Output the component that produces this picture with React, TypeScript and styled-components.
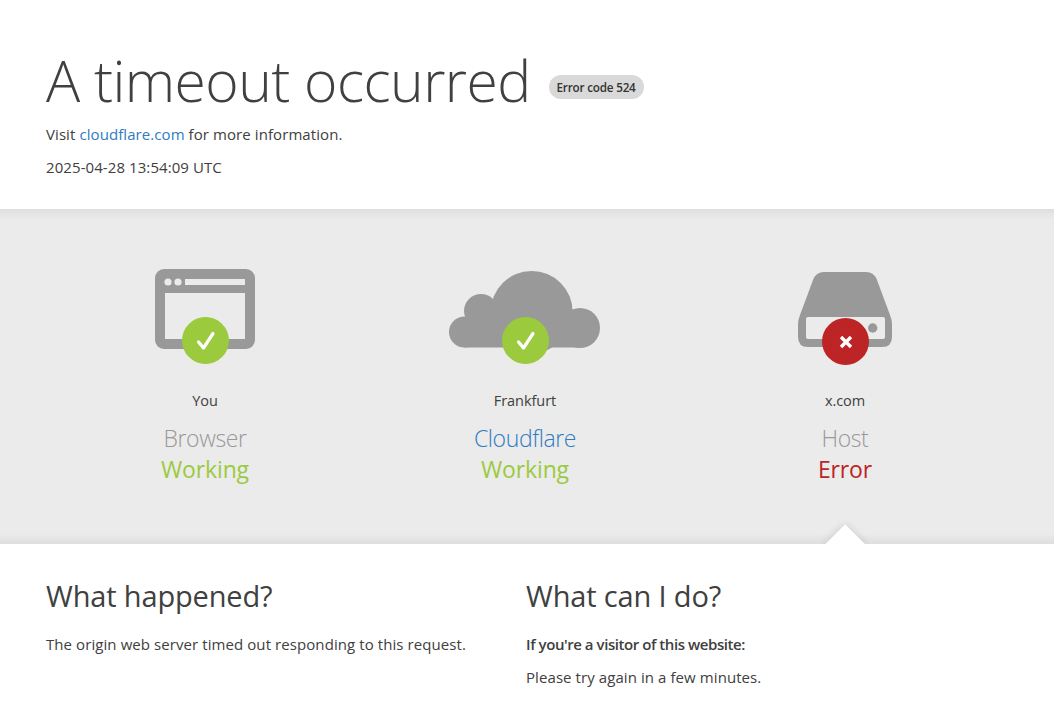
import React from 'react';
import styled, { createGlobalStyle } from 'styled-components';

const GlobalStyle = createGlobalStyle`
  html, body {
    margin: 0;
    height: 703px;
    overflow: hidden;
    background: #fff;
    color: #404040;
    font-family: "Open Sans", "Noto Sans", sans-serif;
    font-size: 15px;
  }
  * { box-sizing: border-box; }
`;

const Page = styled.div`
  width: 1054px;
  height: 703px;
  overflow: hidden;
`;

const Header = styled.header`
  height: 209px;
  padding: 45px 46px 0;
`;

const TitleRow = styled.div`
  display: flex;
  align-items: center;
  height: 73px;
`;

const Title = styled.h1`
  margin: 0 0 4px;
  font-size: 57px;
  font-weight: 300;
  line-height: 70px;
  letter-spacing: -0.55px;
  color: #404040;
`;

const CodeBadge = styled.span`
  margin-left: 18px;
  margin-top: 10px;
  height: 24px;
  padding: 0 8px;
  display: flex;
  align-items: center;
  border-radius: 12px;
  background: #d9d9d9;
  font-size: 11.7px;
  font-weight: 600;
  letter-spacing: -0.2px;
  color: #333;
`;

const Line = styled.p`
  margin: 0;
  height: 33px;
  line-height: 33px;
  font-size: 15px;
  letter-spacing: 0.08px;
`;

const Link = styled.a`
  color: #2f7bbf;
  text-decoration: none;
`;

const StatusSection = styled.section`
  position: relative;
  height: 335px;
  padding: 60px 45px 0;
  display: grid;
  grid-template-columns: repeat(3, 320px);
  background-image: linear-gradient(#dedede, #ebebeb 3%, #ebebeb 97%, #dedede);
`;

const Column = styled.div`
  display: flex;
  flex-direction: column;
  align-items: center;
`;

const IconBox = styled.div`
  position: relative;
  width: 160px;
  height: 96px;
  margin-bottom: 24px;
`;

const IconArt = styled.svg`
  display: block;
  width: 160px;
  height: 96px;
`;

const StatusDot = styled.div<{ $ok: boolean }>`
  position: absolute;
  left: 57px;
  top: ${p => (p.$ok ? '48px' : '49px')};
  width: 47px;
  height: 47px;
  display: flex;
  align-items: center;
  justify-content: center;
  border-radius: 50%;
  background: ${p => (p.$ok ? '#9bca3e' : '#bd2426')};
`;

const Place = styled.div`
  height: 24px;
  line-height: 24px;
  font-size: 14.5px;
  letter-spacing: -0.05px;
`;

const Service = styled.div<{ $blue?: boolean }>`
  margin-top: 10px;
  height: 31px;
  line-height: 31px;
  font-size: 23px;
  font-weight: 300;
  letter-spacing: -0.4px;
  color: ${p => (p.$blue ? '#2f7bbf' : '#999')};
`;

const State = styled.div<{ $ok: boolean }>`
  height: 31px;
  line-height: 31px;
  font-size: 23px;
  letter-spacing: -0.15px;
  color: ${p => (p.$ok ? '#9bca3e' : '#bd2426')};
`;

const Arrow = styled.div`
  position: absolute;
  left: 810px;
  bottom: 0;
  width: 70px;
  height: 32px;
  overflow: hidden;

  &::before {
    content: '';
    position: absolute;
    left: 20.86px;
    top: 17.86px;
    width: 28.28px;
    height: 28.28px;
    background: #fff;
    transform: rotate(45deg);
    box-shadow: 0 0 8px rgba(0, 0, 0, 0.14);
  }
`;

const Details = styled.section`
  padding: 28px 46px 0;
  display: grid;
  grid-template-columns: 480px 480px;
`;

const Heading = styled.h2`
  margin: 0 0 8px;
  height: 48px;
  line-height: 48px;
  font-size: 29px;
  font-weight: 400;
  letter-spacing: -0.15px;
  color: #404040;
`;

const Strong = styled(Line)`
  font-weight: 600;
  letter-spacing: -0.44px;
`;

const CheckMark = () => (
  <svg width="20" height="20" viewBox="0 0 20 20">
    <path d="M2.5 11 L7.5 17 L17 2.5" fill="none" stroke="#fff" strokeWidth="3.2" strokeLinecap="round" strokeLinejoin="round" />
  </svg>
);

const CrossMark = () => (
  <svg width="14" height="14" viewBox="0 0 14 14">
    <path d="M2 2 L12 12 M12 2 L2 12" fill="none" stroke="#fff" strokeWidth="3.4" />
  </svg>
);

// all three drawings share a 160x96 box, coordinates taken from the reference
const BrowserArt = () => (
  <IconArt viewBox="0 0 160 96">
    <rect x="30" y="0" width="100" height="80" rx="9" fill="#999" />
    <rect x="40" y="24" width="80" height="46" fill="#ebebeb" />
    <rect x="60" y="10" width="60" height="6" fill="#ebebeb" />
    <circle cx="43" cy="13" r="3.6" fill="#ebebeb" />
    <circle cx="53" cy="13" r="3.6" fill="#ebebeb" />
  </IconArt>
);

const CloudArt = () => (
  <IconArt viewBox="0 0 160 96">
    <g fill="#999">
      <circle cx="19.5" cy="63" r="15.5" />
      <circle cx="36" cy="42" r="17" />
      <circle cx="86.7" cy="43" r="41" />
      <circle cx="135" cy="59" r="20" />
      <rect x="19.5" y="50" width="116" height="28.5" />
    </g>
  </IconArt>
);

const DriveArt = () => (
  <IconArt viewBox="0 0 160 96">
    <path
      d="M59 3 H101 Q109 3 112 11 L125 46 Q127 51 127 55 V68 Q127 78 117 78 H43 Q33 78 33 68 V55 Q33 51 35 46 L48 11 Q51 3 59 3 Z"
      fill="#999"
    />
    <rect x="41" y="48" width="79" height="22" rx="2" fill="#ebebeb" />
    <circle cx="107.7" cy="59" r="4.7" fill="#999" />
  </IconArt>
);

const App: React.FC = () => {
  return (
    <Page>
      <GlobalStyle />
      <Header>
        <TitleRow>
          <Title>A timeout occurred</Title>
          <CodeBadge>Error code 524</CodeBadge>
        </TitleRow>
        <Line>
          Visit <Link href="#">cloudflare.com</Link> for more information.
        </Line>
        <Line>2025-04-28 13:54:09 UTC</Line>
      </Header>
      <StatusSection>
        <Column>
          <IconBox>
            <BrowserArt />
            <StatusDot $ok><CheckMark /></StatusDot>
          </IconBox>
          <Place>You</Place>
          <Service>Browser</Service>
          <State $ok>Working</State>
        </Column>
        <Column>
          <IconBox>
            <CloudArt />
            <StatusDot $ok><CheckMark /></StatusDot>
          </IconBox>
          <Place>Frankfurt</Place>
          <Service $blue>Cloudflare</Service>
          <State $ok>Working</State>
        </Column>
        <Column>
          <IconBox>
            <DriveArt />
            <StatusDot $ok={false}><CrossMark /></StatusDot>
          </IconBox>
          <Place>x.com</Place>
          <Service>Host</Service>
          <State $ok={false}>Error</State>
        </Column>
        <Arrow />
      </StatusSection>
      <Details>
        <div>
          <Heading>What happened?</Heading>
          <Line>The origin web server timed out responding to this request.</Line>
        </div>
        <div>
          <Heading>What can I do?</Heading>
          <Strong>If you're a visitor of this website:</Strong>
          <Line>Please try again in a few minutes.</Line>
        </div>
      </Details>
    </Page>
  );
};

export default App;
